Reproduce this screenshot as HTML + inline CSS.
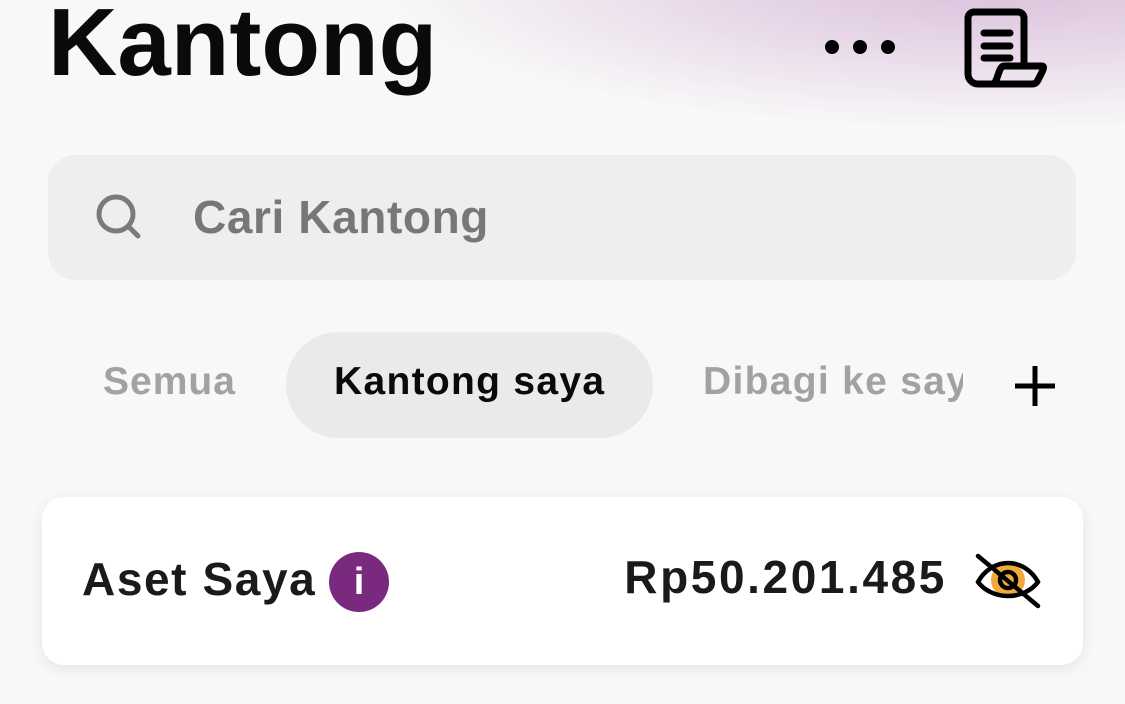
<!DOCTYPE html>
<html><head><style>
body{margin:0;width:1125px;height:704px;overflow:hidden;background:#f8f8f8;font-family:"Liberation Sans",sans-serif;position:relative}
.grad{position:absolute;left:0;top:0;width:1125px;height:130px;background:radial-gradient(ellipse 620px 150px at 1000px -20px,#d9bfda 0%,#e7d7e8 45%,rgba(248,248,248,0) 100%)}
.a{position:absolute;white-space:nowrap;font-weight:bold}
</style></head><body>
<div class="grad"></div>
<div class="a" style="left:48px;top:-12px;font-size:96px;color:#0a0a0a;letter-spacing:0px">Kantong</div>
<svg class="a" style="left:820px;top:34px" width="80" height="26"><circle cx="12" cy="13" r="7"/><circle cx="40" cy="13" r="7"/><circle cx="68" cy="13" r="7"/></svg>
<svg class="a" style="left:962px;top:8px" width="86" height="82" viewBox="0 0 86 82" fill="none" stroke="#000" stroke-width="7" stroke-linecap="round" stroke-linejoin="round">
<path d="M30 76H16a10 10 0 0 1-10-10V10a6 6 0 0 1 6-6h44a6 6 0 0 1 6 6v46"/>
<path d="M30 76c6 0 6-18 12-18h38c2 0 2 2 0 6l-4 8c-2 4-4 4-8 4H30z"/>
<path d="M22 25h26M22 38h26M22 50h26" stroke-width="7"/>
</svg>
<div class="a" style="left:48px;top:155px;width:1028px;height:125px;border-radius:28px;background:#eeeeee"></div>
<svg class="a" style="left:94px;top:192px" width="50" height="50" fill="none" stroke="#7a7a7a" stroke-width="5" stroke-linecap="round"><circle cx="22" cy="22" r="17"/><path d="M35 35l9 9"/></svg>
<div class="a" style="left:193px;top:190px;font-size:46px;color:#777;letter-spacing:0.6px">Cari Kantong</div>
<div class="a" style="left:103px;top:360px;font-size:39px;color:#a2a2a2;letter-spacing:1px">Semua</div>
<div class="a" style="left:286px;top:332px;width:367px;height:106px;border-radius:53px;background:#eaeaea"></div>
<div class="a" style="left:334px;top:360px;font-size:39px;color:#0a0a0a;letter-spacing:1.3px">Kantong saya</div>
<div class="a" style="left:703px;top:360px;width:260px;overflow:hidden;font-size:39px;color:#a2a2a2;letter-spacing:1.3px">Dibagi ke saya</div>
<svg class="a" style="left:1013px;top:364px" width="44" height="44" stroke="#000" stroke-width="5"><path d="M22 2v40M2 22h40"/></svg>
<div class="a" style="left:42px;top:497px;width:1041px;height:168px;border-radius:22px;background:#fff;box-shadow:0 4px 14px rgba(0,0,0,.08)"></div>
<div class="a" style="left:82px;top:552px;font-size:46px;color:#1a1a1a;letter-spacing:1.6px">Aset Saya</div>
<div class="a" style="left:329px;top:552px;width:60px;height:60px;border-radius:50%;background:#7a2a7e;color:#fff;font-size:38px;text-align:center;line-height:60px">i</div>
<div class="a" style="right:178px;top:550px;font-size:46px;color:#1a1a1a;letter-spacing:2.6px">Rp50.201.485</div>
<svg class="a" style="left:972px;top:552px" width="72" height="58" viewBox="0 0 72 58" fill="none" stroke="#000" stroke-width="4.5" stroke-linecap="round">
<circle cx="36" cy="28" r="17" fill="#f2a93b" stroke="none"/>
<path d="M6 30c6-11 17-19 30-19s24 8 30 19"/>
<path d="M6 30c6 8 17 14 30 14s24-6 30-14" />
<circle cx="36" cy="28" r="8"/>
<path d="M6 4l60 50"/>
</svg>
</body></html>
